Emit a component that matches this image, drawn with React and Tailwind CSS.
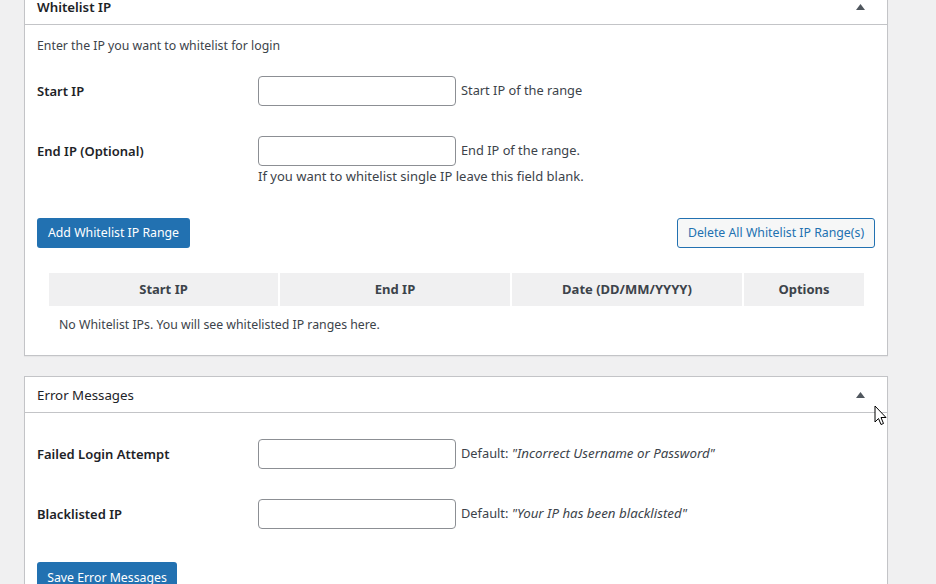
function Arrow() {
  return (
    <svg width="9" height="6" viewBox="0 0 9 6" className="fill-[#50575e]">
      <path d="M4.5 0 L9 6 L0 6 Z" />
    </svg>
  );
}

function Panel({ title, children, className = '', titleWeight = 'font-semibold' }) {
  return (
    <div className={`bg-white border border-[#c3c4c7] shadow-[0_1px_1px_rgba(0,0,0,0.04)] ${className}`}>
      <div className="flex items-center justify-between h-[36px] px-3 border-b border-[#c3c4c7]">
        <h2 className={`pt-[3px] text-[13.3px] text-[#1d2327] ${titleWeight}`}>{title}</h2>
        <div className="pr-[10px]">
          <Arrow />
        </div>
      </div>
      {children}
    </div>
  );
}

function Field({ label, children, note, className = '' }) {
  return (
    <div className={`flex ${className}`}>
      <div className="w-[221px] shrink-0 h-[30px] flex items-center pt-[1px] text-[13px] font-semibold text-[#1d2327]">
        {label}
      </div>
      <div>
        <div className="flex items-center">
          <input className="w-[198px] h-[30px] rounded-[4px] border border-[#8c8f94] bg-white px-2 outline-none" />
          <span className="ml-[5px] text-[12.8px] text-[#3c434a]">{children}</span>
        </div>
        {note && <p className="text-[13px] text-[#3c434a] mt-[1px] leading-[18px]">{note}</p>}
      </div>
    </div>
  );
}

function Cursor() {
  return (
    <svg width="13" height="21" viewBox="0 0 13 21" className="absolute left-[874px] top-[405px]">
      <path d="M1 1 L1 17 L4.5 13.5 L7 19.5 L9.5 18.5 L7 12.5 L12 12.5 Z" fill="#fff" stroke="#000" strokeWidth="1" strokeLinejoin="round" />
    </svg>
  );
}

export default function App() {
  return (
    <div className="relative w-[936px] h-[584px] overflow-hidden bg-[#f0f0f1] font-['Noto_Sans',sans-serif] text-[#3c434a]">
      <div className="pl-[24px] w-[888px] mt-[-12px]">
        <Panel title="Whitelist IP">
          <div className="px-3 pb-3">
            <p className="text-[12.3px] pt-[11px] leading-[20px]">Enter the IP you want to whitelist for login</p>
            <Field label="Start IP" className="mt-[20px]">Start IP of the range</Field>
            <Field label="End IP (Optional)" className="mt-[30px]" note="If you want to whitelist single IP leave this field blank.">
              End IP of the range.
            </Field>
            <div className="flex justify-between mt-[33px]">
              <button className="h-[30px] w-[153px] rounded-[3px] bg-[#2271b1] text-white text-[12.3px]">Add Whitelist IP Range</button>
              <button className="h-[30px] w-[198px] rounded-[3px] border border-[#2271b1] bg-[#f6f7f7] text-[#2271b1] text-[12.3px]">
                Delete All Whitelist IP Range(s)
              </button>
            </div>
            <div className="mx-[12px] mt-[25px]">
              <div className="grid grid-cols-[229px_230px_230px_120px] gap-[2px] h-[33px]">
                {['Start IP', 'End IP', 'Date (DD/MM/YYYY)', 'Options'].map((h) => (
                  <div key={h} className="bg-[#f0f0f1] flex items-center justify-center text-[13px] font-bold text-[#3c434a]">{h}</div>
                ))}
              </div>
              <p className="text-[12.3px] pl-[10px] pt-[9px] leading-[20px] h-[37px]">No Whitelist IPs. You will see whitelisted IP ranges here.</p>
            </div>
          </div>
        </Panel>
        <Panel title="Error Messages" titleWeight="font-normal" className="mt-[20px]">
          <div className="px-3 pb-3">
            <Field label="Failed Login Attempt" className="mt-[26px]">
              Default: <i className="text-[13.3px]">"Incorrect Username or Password"</i>
            </Field>
            <Field label="Blacklisted IP" className="mt-[30px]">
              Default: <i className="text-[13.3px]">"Your IP has been blacklisted"</i>
            </Field>
            <button className="mt-[33px] pt-[2px] h-[30px] w-[140px] rounded-[3px] bg-[#2271b1] text-white text-[12.3px]">Save Error Messages</button>
          </div>
        </Panel>
      </div>
      <Cursor />
    </div>
  );
}
